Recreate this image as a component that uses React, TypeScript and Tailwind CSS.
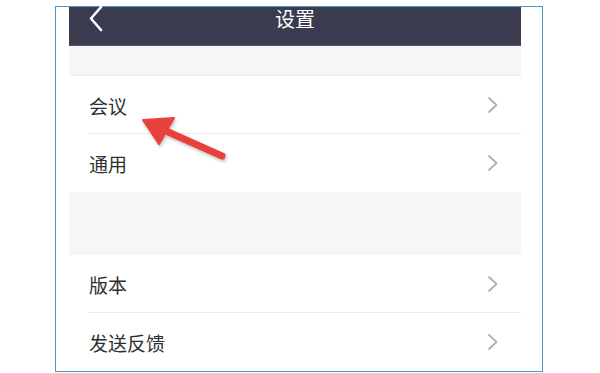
import React from 'react'

const font = { fontFamily: '"Noto Sans CJK SC", "Noto Sans", sans-serif' }

function Chevron() {
  return (
    <svg width="12" height="18" viewBox="0 0 12 18" fill="none">
      <path d="M2 2l7.5 7L2 16" stroke="#b0b0b4" strokeWidth="1.8" strokeLinecap="round" strokeLinejoin="round" />
    </svg>
  )
}

function Row({ label, line }: { label: string; line?: boolean }) {
  return (
    <div className="relative flex h-[58px] items-center justify-between bg-white pl-[20px] pr-[22px]">
      <span className="text-[19px] leading-none text-[#2f2f2f]">{label}</span>
      <Chevron />
      {line && <div className="absolute bottom-0 left-[19px] right-0 h-px bg-[#ececee]" />}
    </div>
  )
}

export default function App() {
  return (
    <div className="relative h-[373px] w-[600px] overflow-hidden bg-white pt-[6px]" style={font}>
      <div className="ml-[55px] h-[366px] w-[488px] border-[1.5px] border-[#4b98c6] pl-[13px] pr-[21px]">
        {/* 标题栏 */}
        <div className="relative flex h-[39px] items-center justify-center border-b border-[#55556a] bg-[#3b3b4f]">
          <svg className="absolute left-[19px] top-[-1px]" width="16" height="26" viewBox="0 0 16 26" fill="none">
            <path d="M13 1L3 12.5 13 24" stroke="#ffffff" strokeWidth="2.6" strokeLinecap="round" strokeLinejoin="round" />
          </svg>
          <span className="mt-[-14px] text-[20px] leading-none text-white">设置</span>
        </div>
        <div className="h-[30px] border-b border-[#ededf0] bg-[#f6f6f8]" />
        <Row label="会议" line />
        <Row label="通用" />
        <div className="h-[63px] bg-[#f6f6f8]" />
        <Row label="版本" line />
        <Row label="发送反馈" />
      </div>

      {/* 红色箭头 */}
      <svg className="absolute left-0 top-0" width="600" height="373" viewBox="0 0 600 373" fill="none">
        <defs>
          <filter id="sh" x="-20%" y="-20%" width="140%" height="140%">
            <feDropShadow dx="1" dy="2" stdDeviation="1.5" floodColor="#000" floodOpacity="0.25" />
          </filter>
        </defs>
        <g filter="url(#sh)">
          <path d="M166 131 L222 156" stroke="#e8403b" strokeWidth="7" strokeLinecap="round" />
          <path d="M143 120 L174 118 L159 144 Z" fill="#e8403b" stroke="#e8403b" strokeWidth="2" strokeLinejoin="round" />
        </g>
      </svg>
    </div>
  )
}
